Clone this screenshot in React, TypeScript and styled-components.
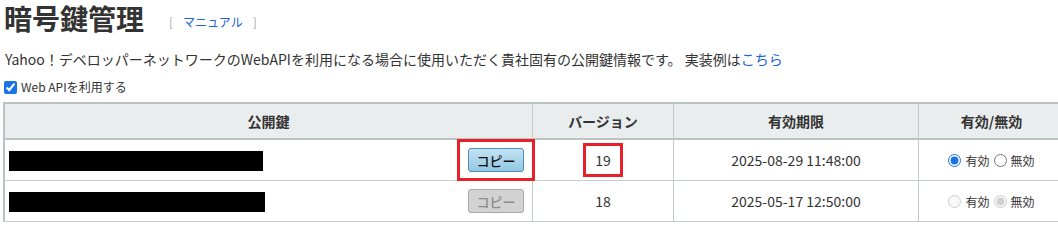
import styled, { createGlobalStyle } from "styled-components";

const GlobalStyle = createGlobalStyle`
  html, body {
    margin: 0;
    padding: 0;
    background: #fff;
    overflow: hidden;
  }
  body {
    font-family: "Noto Sans CJK JP", "Noto Sans", sans-serif;
    color: #333;
  }
`;

const Page = styled.div`
  padding: 0 0 0 3px;
  width: 1060px;
`;

const TitleRow = styled.div`
  display: flex;
  align-items: flex-end;
  height: 36px;
`;

const Title = styled.h1`
  margin: 0 0 0 1px;
  font-size: 28px;
  line-height: 36px;
  font-weight: 700;
  color: #333;
`;

const Manual = styled.span`
  margin: 0 0 6px 25px;
  font-size: 12px;
  line-height: 16px;
  color: #aaa;
  a {
    color: #1a63d8;
    text-decoration: none;
    margin: 0 10px;
  }
`;

const Lead = styled.p`
  margin: 13px 0 0 2px;
  font-size: 14px;
  line-height: 20px;
  color: #333;
  a {
    color: #1a63d8;
    text-decoration: none;
  }
`;

const CheckLabel = styled.label`
  display: flex;
  align-items: center;
  gap: 4px;
  margin: 10px 0 0 1px;
  font-size: 12px;
  line-height: 16px;
  color: #333;
  input {
    margin: 0;
    width: 13px;
    height: 13px;
    accent-color: #1a73e8;
  }
`;

const Table = styled.table`
  margin-top: 7px;
  width: 1058px;
  border-collapse: collapse;
  border-top: 2px solid #bcc4c1;
  border-left: 2px solid #bcc4c1;
  table-layout: fixed;
`;

const Th = styled.th<{ $w: number }>`
  width: ${(p) => p.$w}px;
  height: 34px;
  padding: 0;
  background: #e9eded;
  border-right: 1px solid #c6ccca;
  border-bottom: 2px solid #bcc4c1;
  font-size: 14px;
  font-weight: 700;
  color: #333;
  text-align: center;
`;

const Td = styled.td`
  height: 40px;
  padding: 0 4px;
  border-right: 1px solid #c6ccca;
  border-bottom: 1px solid #c6ccca;
  font-size: 14px;
  color: #333;
  text-align: center;
  vertical-align: middle;
`;

const KeyCell = styled.div`
  display: flex;
  align-items: center;
  justify-content: space-between;
  padding-right: 4px;
`;

const Redacted = styled.span<{ $w: number }>`
  display: block;
  width: ${(p) => p.$w}px;
  height: 20px;
  margin-top: 2px;
  background: #000;
`;

const CopyButton = styled.button<{ $disabled?: boolean }>`
  width: 56px;
  height: 24px;
  padding: 0;
  border-radius: 3px;
  font-family: inherit;
  font-size: 13px;
  font-weight: 500;
  border: 1px solid ${(p) => (p.$disabled ? "#a9a9a9" : "#4f8fc0")};
  color: ${(p) => (p.$disabled ? "#8c8c8c" : "#111")};
  background: ${(p) =>
    p.$disabled ? "#d2d2d2" : "linear-gradient(#c4e3f3, #93c7e2)"};
`;

const Highlight = styled.span<{ $x: number; $y: number }>`
  position: relative;
  display: inline-block;
  &::after {
    content: "";
    position: absolute;
    left: -${(p) => p.$x}px;
    right: -${(p) => p.$x}px;
    top: -${(p) => p.$y}px;
    bottom: -${(p) => p.$y}px;
    border: 3px solid #e8202a;
    pointer-events: none;
  }
`;

const Radios = styled.div`
  display: flex;
  align-items: center;
  justify-content: center;
  gap: 4px;
  font-size: 12px;
  color: #333;
  label {
    display: flex;
    align-items: center;
    gap: 4px;
  }
  input {
    margin: 0;
    width: 13px;
    height: 13px;
    accent-color: #1a73e8;
  }
`;

interface IKey {
  width: number;
  version: number;
  expires: string;
  active: boolean;
  current: boolean;
}

const keys: IKey[] = [
  { width: 254, version: 19, expires: "2025-08-29 11:48:00", active: true, current: true },
  { width: 256, version: 18, expires: "2025-05-17 12:50:00", active: false, current: false },
];

export default function App() {
  return (
    <Page>
      <GlobalStyle />
      <TitleRow>
        <Title>暗号鍵管理</Title>
        <Manual>
          [<a href="#">マニュアル</a>]
        </Manual>
      </TitleRow>
      <Lead>
        Yahoo！デベロッパーネットワークのWebAPIを利用になる場合に使用いただく貴社固有の公開鍵情報です。 実装例は
        <a href="#">こちら</a>
      </Lead>
      <CheckLabel>
        <input type="checkbox" defaultChecked />
        Web APIを利用する
      </CheckLabel>
      <Table>
        <thead>
          <tr>
            <Th $w={527}>公開鍵</Th>
            <Th $w={140}>バージョン</Th>
            <Th $w={244}>有効期限</Th>
            <Th $w={145}>有効/無効</Th>
          </tr>
        </thead>
        <tbody>
          {keys.map((k) => (
            <tr key={k.version}>
              <Td>
                <KeyCell>
                  <Redacted $w={k.width} />
                  {k.current ? (
                    <Highlight $x={11} $y={9}>
                      <CopyButton>コピー</CopyButton>
                    </Highlight>
                  ) : (
                    <CopyButton $disabled disabled>
                      コピー
                    </CopyButton>
                  )}
                </KeyCell>
              </Td>
              <Td>
                {k.current ? (
                  <Highlight $x={12} $y={7}>{k.version}</Highlight>
                ) : (
                  k.version
                )}
              </Td>
              <Td>{k.expires}</Td>
              <Td>
                <Radios>
                  <label>
                    <input
                      type="radio"
                      name={`st${k.version}`}
                      defaultChecked={k.active}
                      disabled={!k.current}
                    />
                    有効
                  </label>
                  <label>
                    <input
                      type="radio"
                      name={`st${k.version}`}
                      defaultChecked={!k.active}
                      disabled={!k.current}
                    />
                    無効
                  </label>
                </Radios>
              </Td>
            </tr>
          ))}
        </tbody>
      </Table>
    </Page>
  );
}
